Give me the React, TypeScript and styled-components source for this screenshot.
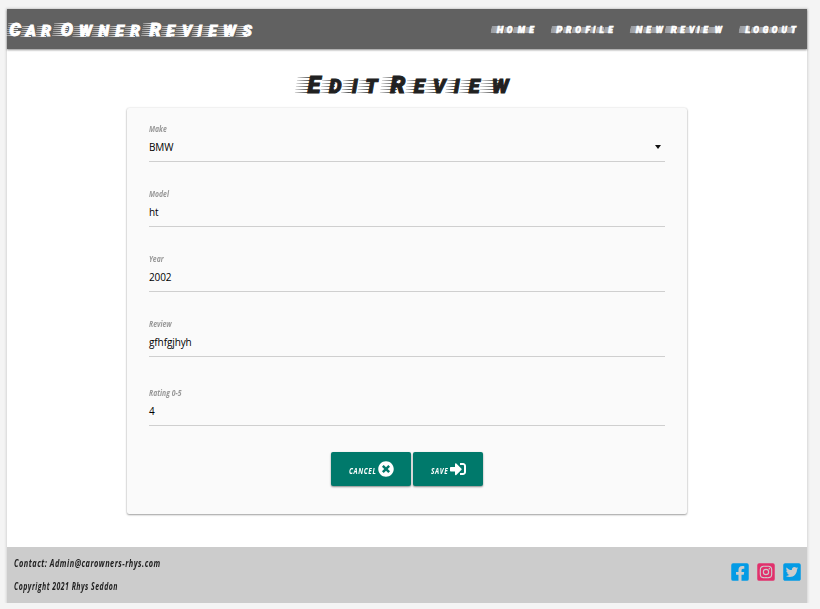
import React from 'react';
import styled, { createGlobalStyle, css } from 'styled-components';
import {
  FaTimesCircle,
  FaSignInAlt,
  FaFacebookSquare,
  FaInstagramSquare,
  FaTwitterSquare,
} from 'react-icons/fa';

const GlobalStyle = createGlobalStyle`
  * { box-sizing: border-box; }
  html, body { margin: 0; padding: 0; }
  body { background: #f4f4f4; overflow: hidden; font-family: "Open Sans", "Noto Sans", sans-serif; }
`;

const Page = styled.div`
  width: 800px;
  height: 594px;
  margin: 9px 0 0 7px;
  background: #fff;
  box-shadow: 0 0 2px 1px #d6d6d6;
  display: flex;
  flex-direction: column;
`;

const Header = styled.header`
  height: 40px;
  flex: none;
  background: #616161;
  box-shadow: 0 1px 2px rgba(0, 0, 0, 0.45);
  display: flex;
  align-items: center;
  justify-content: space-between;
`;

type Size = 'brand' | 'nav' | 'title';

const sizes = {
  brand: css`
    --cap: 18.3px;
    --small: 15.5px;
    --streak: 75%;
    --from: 0.35;
    --lines: repeating-linear-gradient(to top, rgba(255, 255, 255, 0.85) 0 1px, transparent 1px 2px);
    --stroke: 0.8px;
    color: #fff;
  `,
  nav: css`
    --cap: 9.8px;
    --small: 8.6px;
    --streak: 92%;
    --from: 0.75;
    --lines: linear-gradient(rgba(225, 230, 240, 0.58), rgba(225, 230, 240, 0.58));
    --stroke: 0.5px;
    color: #fff;
  `,
  title: css`
    --cap: 24px;
    --small: 20px;
    --streak: 68%;
    --from: 0.2;
    --lines: repeating-linear-gradient(to top, rgba(33, 33, 33, 0.75) 0 1px, transparent 1px 3px);
    --stroke: 0.9px;
    color: #212121;
  `,
};

const SpeedLine = styled.span<{ $size: Size; $gap: number }>`
  ${(p) => sizes[p.$size]}
  display: flex;
  gap: ${(p) => p.$gap}px;
  font-family: Roboto, sans-serif;
  font-weight: 900;
  font-style: italic;
  line-height: 1;
  text-transform: uppercase;
  white-space: nowrap;
`;

const SpeedWord = styled.span`
  font-size: var(--cap);
`;

const Glyph = styled.span<{ $advance: number }>`
  position: relative;
  z-index: 0;
  display: inline-block;
  width: ${(p) => p.$advance}px;
  font-size: var(--small);
  direction: rtl;
  -webkit-text-stroke: var(--stroke) currentColor;
  &:first-child {
    font-size: var(--cap);
  }
  &::before {
    content: '';
    position: absolute;
    z-index: -1;
    left: 0;
    bottom: 0.158em;
    width: var(--streak);
    height: 0.711em;
    transform: skewX(-10deg);
    background: var(--lines);
    mask-image: linear-gradient(to right, rgba(0, 0, 0, var(--from)), #000 70%);
  }
`;

const Nav = styled.nav`
  display: flex;
  gap: 17px;
  padding: 2px 11px 0 0;
`;

const Brand = styled.div`
  padding-top: 2px;
`;

const Main = styled.main`
  height: 498px;
  flex: none;
  display: flex;
  flex-direction: column;
  align-items: center;
`;

const Title = styled.h1`
  margin: 24px 0 0;
  height: 35px;
  padding-right: 10px;
`;

const Card = styled.form`
  width: 560px;
  height: 406px;
  padding: 13px 22px 0;
  background: #fafafa;
  border-radius: 2px;
  box-shadow: 0 1px 2px rgba(0, 0, 0, 0.35), 0 0 2px rgba(0, 0, 0, 0.15);
`;

const Narrow = styled.span<{ $scale: number }>`
  display: inline-block;
  font-family: "Open Sans", "Noto Sans", sans-serif;
  font-style: italic;
  font-weight: 700;
  white-space: nowrap;
  transform: scaleX(${(p) => p.$scale});
  transform-origin: left center;
`;

const Field = styled.div<{ $last?: boolean }>`
  height: 41px;
  margin-bottom: 24px;
  margin-top: ${(p) => (p.$last ? 28 : 0)}px;
  border-bottom: 1px solid #cfcfcf;
`;

const Label = styled.label`
  display: block;
  height: 16px;
  line-height: 16px;
  font-size: 9px;
  color: #989898;
`;

const Value = styled.div`
  display: flex;
  align-items: center;
  justify-content: space-between;
  height: 20px;
  font-size: 10px;
  letter-spacing: -0.1px;
  color: #000;
`;

const Caret = styled.span`
  margin-right: 4px;
  border: 3.5px solid transparent;
  border-top: 4px solid #111;
  border-bottom: 0;
`;

const Actions = styled.div`
  display: flex;
  justify-content: center;
  gap: 2px;
  margin-top: 26px;
`;

const Button = styled.button<{ $width: number }>`
  display: flex;
  align-items: center;
  width: ${(p) => p.$width}px;
  height: 34px;
  padding: 0 0 0 18px;
  border: 0;
  border-radius: 2px;
  background: #00796b;
  color: #fff;
  box-shadow: 0 1px 2px rgba(0, 0, 0, 0.45);
  font-size: 9.5px;
  letter-spacing: 0.9px;
  svg { flex: none; width: 16px; height: 16px; margin-top: -1px; }
`;

const ButtonText = styled.span<{ $width: number }>`
  width: ${(p) => p.$width}px;
  padding-top: 3px;
  text-align: left;
`;

const Footer = styled.footer`
  height: 56px;
  flex: none;
  display: flex;
  justify-content: space-between;
  padding: 5px 6px 0 7px;
  background: #ccc;
  color: #212121;
  font-size: 10px;
`;

const Lines = styled.div`
  display: flex;
  flex-direction: column;
  line-height: 23px;
  letter-spacing: 0.7px;
`;

const Socials = styled.div`
  display: flex;
  gap: 8px;
  padding-top: 10px;
  svg { width: 18px; height: 20px; }
`;

const SocialIcon = styled.span<{ $color: string }>`
  color: ${(p) => p.$color};
`;

type Word = [string, number[]];

const brand: Word[] = [
  ['Car', [14, 15, 15]],
  ['Owner', [20, 19, 17, 15, 16]],
  ['Reviews', [19, 14, 17, 10, 15, 19, 16]],
];

const title: Word[] = [
  ['Edit', [25, 21, 16, 20]],
  ['Review', [25, 19, 21, 14, 20, 29]],
];

const navItems: Word[][] = [
  [['Home', [12.5, 9, 12.5, 9]]],
  [['Profile', [11.5, 9, 9.5, 9, 5.5, 8.5, 9]]],
  [['New', [12.5, 8.5, 12]], ['Review', [12, 8, 9.5, 5, 8.5, 14]]],
  [['Logout', [11.5, 8.5, 9.5, 9, 9.5, 9]]],
];

const fields = [
  { label: 'Make', value: 'BMW', select: true },
  { label: 'Model', value: 'ht' },
  { label: 'Year', value: '2002' },
  { label: 'Review', value: 'gfhfgjhyh' },
  { label: 'Rating 0-5', value: '4', last: true },
];

function Speed({ words, size, gap }: { words: Word[]; size: Size; gap: number }) {
  return (
    <SpeedLine $size={size} $gap={gap}>
      {words.map(([word, advances]) => (
        <SpeedWord key={word}>
          {word.split('').map((letter, i) => (
            <Glyph key={i} $advance={advances[i]}>{letter}</Glyph>
          ))}
        </SpeedWord>
      ))}
    </SpeedLine>
  );
}

export default function App() {
  return (
    <>
      <GlobalStyle />
      <Page>
        <Header>
          <Brand><Speed size="brand" gap={2} words={brand} /></Brand>
          <Nav>
            {navItems.map((words) => (
              <Speed key={words[0][0]} size="nav" gap={2} words={words} />
            ))}
          </Nav>
        </Header>
        <Main>
          <Title>
            <Speed size="title" gap={3} words={title} />
          </Title>
          <Card>
            {fields.map((f) => (
              <Field key={f.label} $last={f.last}>
                <Label><Narrow $scale={0.76}>{f.label}</Narrow></Label>
                <Value>{f.value}{f.select && <Caret />}</Value>
              </Field>
            ))}
            <Actions>
              <Button type="button" $width={80}>
                <ButtonText $width={29}><Narrow $scale={0.68}>CANCEL</Narrow></ButtonText>
                <FaTimesCircle />
              </Button>
              <Button type="button" $width={70}>
                <ButtonText $width={19}><Narrow $scale={0.68}>SAVE</Narrow></ButtonText>
                <FaSignInAlt />
              </Button>
            </Actions>
          </Card>
        </Main>
        <Footer>
          <Lines>
            <Narrow $scale={0.735}>Contact: Admin@carowners-rhys.com</Narrow>
            <Narrow $scale={0.69}>Copyright 2021 Rhys Seddon</Narrow>
          </Lines>
          <Socials>
            <SocialIcon $color="#039be5"><FaFacebookSquare /></SocialIcon>
            <SocialIcon $color="#e1306c"><FaInstagramSquare /></SocialIcon>
            <SocialIcon $color="#039be5"><FaTwitterSquare /></SocialIcon>
          </Socials>
        </Footer>
      </Page>
    </>
  );
}
